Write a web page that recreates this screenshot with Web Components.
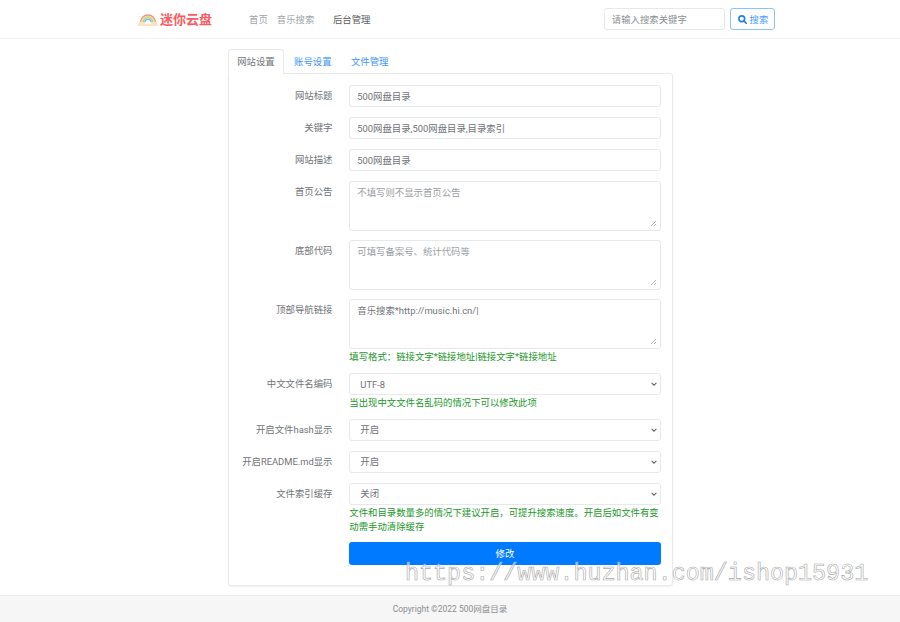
<!DOCTYPE html>
<html lang="zh">
<head>
<meta charset="utf-8">
<title>500网盘目录</title>
<style>
    html, body { margin: 0; padding: 0; background: #fff; }
    body {
        font: 9.4px/15px Roboto, "Noto Sans CJK SC", sans-serif;
        color: #212529;
        height: 622px;
        overflow: hidden;
        position: relative;
    }
</style>
</head>
<body>
<template id="field-styles">
    <style>
        input, textarea, select {
            display: block;
            box-sizing: border-box;
            width: 100%;
            margin: 0;
            border: 1px solid #e6e8eb;
            border-radius: 3px;
            background-color: #fff;
            color: #6f7378;
            font: inherit;
            outline: none;
        }
        input, select { height: 22.6px; padding: 0 7px; }
        textarea { height: 50px; padding: 3px 7px; resize: vertical; }
        select {
            appearance: none;
            padding-left: 10px;
            background-image: url("data:image/svg+xml,%3Csvg xmlns='http://www.w3.org/2000/svg' width='6' height='4' viewBox='0 0 6 4'%3E%3Cpath d='M.6.8 3 3.200 5.400.8' fill='none' stroke='%23666' stroke-width='1.100'/%3E%3C/svg%3E");
            background-repeat: no-repeat;
            background-position: right 3px center;
        }
        ::placeholder { color: #9a9ea3; opacity: 1; }
        ::-webkit-resizer {
            background: url("data:image/svg+xml,%3Csvg xmlns='http://www.w3.org/2000/svg' width='12' height='12' viewBox='0 0 12 12'%3E%3Cpath d='M11 6 6 11M11 9 9 11' stroke='%23b5b5b5' fill='none'/%3E%3C/svg%3E");
        }
    </style>
</template>

<site-page>
    <site-header slot="header" active="后台管理"></site-header>
    <settings-tabs slot="tabs" active="网站设置"></settings-tabs>
    <settings-card slot="card">
        <form-row label="网站标题"><text-field value="500网盘目录"></text-field></form-row>
        <form-row label="关键字"><text-field value="500网盘目录,500网盘目录,目录索引"></text-field></form-row>
        <form-row label="网站描述"><text-field value="500网盘目录"></text-field></form-row>
        <form-row label="首页公告"><area-field placeholder="不填写则不显示首页公告"></area-field></form-row>
        <form-row label="底部代码"><area-field placeholder="可填写备案号、统计代码等"></area-field></form-row>
        <form-row label="顶部导航链接" help="填写格式：链接文字*链接地址|链接文字*链接地址"><area-field value="音乐搜索*http://music.hi.cn/|"></area-field></form-row>
        <form-row label="中文文件名编码" help="当出现中文文件名乱码的情况下可以修改此项"><select-field options="UTF-8,GBK"></select-field></form-row>
        <form-row label="开启文件hash显示"><select-field options="开启,关闭"></select-field></form-row>
        <form-row label="开启README.md显示"><select-field options="开启,关闭"></select-field></form-row>
        <form-row label="文件索引缓存" help="文件和目录数量多的情况下建议开启，可提升搜索速度。开启后如文件有变动需手动清除缓存"><select-field options="关闭,开启"></select-field></form-row>
        <form-row><submit-button>修改</submit-button></form-row>
    </settings-card>
    <site-footer slot="footer">Copyright ©2022 500网盘目录</site-footer>
</site-page>
<water-mark>https://www.huzhan.com/ishop15931</water-mark>

<script>
// --- Helper Functions ---
function shadow(el, html) {
    el.attachShadow({ mode: 'open' });
    el.shadowRoot.innerHTML = html;
    return el.shadowRoot;
}

function fieldStyles(root) {
    root.prepend(document.getElementById('field-styles').content.cloneNode(true));
}

// --- Layout ---
class SitePage extends HTMLElement {
    connectedCallback() {
        shadow(this, `
            <style>
                :host { display: flex; flex-direction: column; height: 622px; }
                main { flex: 1; width: 445px; margin: 0 auto; padding-top: 10.4px; box-sizing: border-box; }
            </style>
            <slot name="header"></slot>
            <main>
                <slot name="tabs"></slot>
                <slot name="card"></slot>
            </main>
            <slot name="footer"></slot>
        `);
    }
}

class SiteHeader extends HTMLElement {
    connectedCallback() {
        const links = ['首页', '音乐搜索', '后台管理'];
        const active = this.getAttribute('active');
        const nav = links.map(l => `<a class="${l === active ? 'active' : ''}">${l}</a>`).join('');
        shadow(this, `
            <style>
                :host { display: block; height: 39px; box-sizing: border-box; border-bottom: 1px solid #f1f1f1; }
                .bar { display: flex; align-items: center; height: 38px; padding: 0 125px 0 138px; }
                .logo { display: flex; align-items: center; gap: 2px; width: 111px; color: #fb5a60; font-size: 13px; font-weight: 700; }
                nav { display: flex; flex: 1; }
                nav a { color: #a0a4a8; margin-right: 9px; }
                nav a.active { color: #5a5e63; margin-left: 9.6px; }
                form { display: flex; gap: 4.7px; }
                input {
                    box-sizing: border-box; width: 121px; height: 22.5px; padding: 0 7px;
                    border: 1px solid #e6e8eb; border-radius: 3px; font: inherit; outline: none;
                }
                input::placeholder { color: #8b8f94; opacity: 1; }
                button {
                    display: flex; align-items: center; gap: 2.5px; box-sizing: border-box; width: 45.5px; height: 22.5px; padding: 0 0 0 7.5px;
                    border: 1px solid #8fc2fb; border-radius: 3px; background: #fff; color: #4a9dfb; font: inherit;
                }
            </style>
            <div class="bar">
                <div class="logo">
                    <svg width="20" height="14" viewBox="0 0 20 14" fill="none">
                        <path d="M2.500 10.500a7.500 7.500 0 0 1 15 0" stroke="#f08f88" stroke-width="1.400"/>
                        <path d="M4 10.500a6 6 0 0 1 12 0" stroke="#f3d873" stroke-width="1.300"/>
                        <path d="M5.400 10.500a4.600 4.600 0 0 1 9.200 0" stroke="#8fd0a8" stroke-width="1.300"/>
                        <path d="M6.800 10.500a3.200 3.200 0 0 1 6.400 0" stroke="#86b8e8" stroke-width="1.300"/>
                        <path d="M0 12.500c0-2 2.200-3.300 4-2.600 1.200-.5 2.800.2 3 2 .4-.1 6-.1 6 0 .2-1.800 1.800-2.500 3-2 1.800-.7 4 .6 4 2.600 0 1-.8 1.500-1.500 1.500h-17C.8 14 0 13.500 0 12.500z" fill="#fbe4c4"/>
                    </svg>
                    <span>迷你云盘</span>
                </div>
                <nav>${nav}</nav>
                <form>
                    <input placeholder="请输入搜索关键字">
                    <button type="button">
                        <svg width="9" height="9" viewBox="0 0 10 10" fill="none" stroke="#1f7fe8" stroke-width="1.800">
                            <circle cx="4.200" cy="4.200" r="3.200"/><path d="M6.600 6.600 9.200 9.200" stroke-linecap="round"/>
                        </svg>搜索
                    </button>
                </form>
            </div>
        `);
    }
}

class SettingsTabs extends HTMLElement {
    connectedCallback() {
        const tabs = ['网站设置', '账号设置', '文件管理'];
        const active = this.getAttribute('active');
        const items = tabs.map(t => `<a class="${t === active ? 'active' : ''}">${t}</a>`).join('');
        shadow(this, `
            <style>
                :host { display: flex; height: 23.4px; position: relative; z-index: 1; }
                a { box-sizing: border-box; height: 23.4px; line-height: 23px; padding: 0 8.7px; color: #3f97fb; border: 1px solid transparent; }
                a.active {
                    height: 24.4px; color: #6f7378; background: #fff;
                    border-color: #e8e9eb #e8e9eb #fff; border-radius: 3px 3px 0 0;
                }
            </style>
            ${items}
        `);
    }
}

class SettingsCard extends HTMLElement {
    connectedCallback() {
        shadow(this, `
            <style>
                :host {
                    display: block; box-sizing: border-box; height: 513px; padding-top: 10.8px;
                    border: 1px solid #e8e9eb; border-radius: 0 3px 3px 3px;
                    box-shadow: 0 1px 2px rgba(0,0,0,.06);
                }
            </style>
            <slot></slot>
        `);
    }
}

class FormRow extends HTMLElement {
    connectedCallback() {
        const label = this.getAttribute('label') || '';
        const help = this.getAttribute('help');
        shadow(this, `
            <style>
                :host { display: grid; grid-template-columns: 104px 311.4px; column-gap: 16.800px; margin-bottom: 9.4px; }
                label { text-align: right; color: #6f7378; line-height: 22.6px; white-space: nowrap; }
                .help { margin: 1px 0 -1px; color: #22982a; line-height: 14px; }
            </style>
            <label>${label}</label>
            <div>
                <slot></slot>
                ${help ? `<div class="help">${help}</div>` : ''}
            </div>
        `);
    }
}

class SiteFooter extends HTMLElement {
    connectedCallback() {
        shadow(this, `
            <style>
                :host {
                    display: block; height: 27px; box-sizing: border-box; border-top: 1px solid #eee;
                    background: #f6f6f6; color: #8a8e92; font-size: 8.5px; line-height: 26px; text-align: center;
                }
            </style>
            <slot></slot>
        `);
    }
}

// --- Form Controls ---
class TextField extends HTMLElement {
    connectedCallback() {
        const root = shadow(this, `<style>:host { display: block; }</style><input>`);
        fieldStyles(root);
        root.querySelector('input').setAttribute('value', this.getAttribute('value') || '');
    }
}

class AreaField extends HTMLElement {
    connectedCallback() {
        const root = shadow(this, `<style>:host { display: block; }</style><textarea></textarea>`);
        fieldStyles(root);
        const area = root.querySelector('textarea');
        area.textContent = this.getAttribute('value') || '';
        area.placeholder = this.getAttribute('placeholder') || '';
    }
}

class SelectField extends HTMLElement {
    connectedCallback() {
        const opts = this.getAttribute('options').split(',').map(o => `<option>${o}</option>`).join('');
        const root = shadow(this, `<style>:host { display: block; }</style><select>${opts}</select>`);
        fieldStyles(root);
    }
}

class SubmitButton extends HTMLElement {
    connectedCallback() {
        shadow(this, `
            <style>
                :host { display: block; margin-top: -.7px; }
                button {
                    display: block; width: 100%; height: 22.6px; border: 0; border-radius: 3px;
                    background: #007bff; color: #fff; font: inherit;
                }
            </style>
            <button type="button"><slot></slot></button>
        `);
    }
}

// sits over the page, as in the shot
class WaterMark extends HTMLElement {
    connectedCallback() {
        shadow(this, `
            <style>
                :host {
                    position: absolute; left: 405px; top: 559px; white-space: nowrap;
                    font: 23.4px/30px "Liberation Mono", monospace;
                    color: rgba(255,255,255,.6);
                    -webkit-text-stroke: .6px #a9a9a9;
                    pointer-events: none;
                }
            </style>
            <slot></slot>
        `);
    }
}

customElements.define('site-page', SitePage);
customElements.define('site-header', SiteHeader);
customElements.define('settings-tabs', SettingsTabs);
customElements.define('settings-card', SettingsCard);
customElements.define('form-row', FormRow);
customElements.define('site-footer', SiteFooter);
customElements.define('text-field', TextField);
customElements.define('area-field', AreaField);
customElements.define('select-field', SelectField);
customElements.define('submit-button', SubmitButton);
customElements.define('water-mark', WaterMark);
</script>
</body>
</html>
